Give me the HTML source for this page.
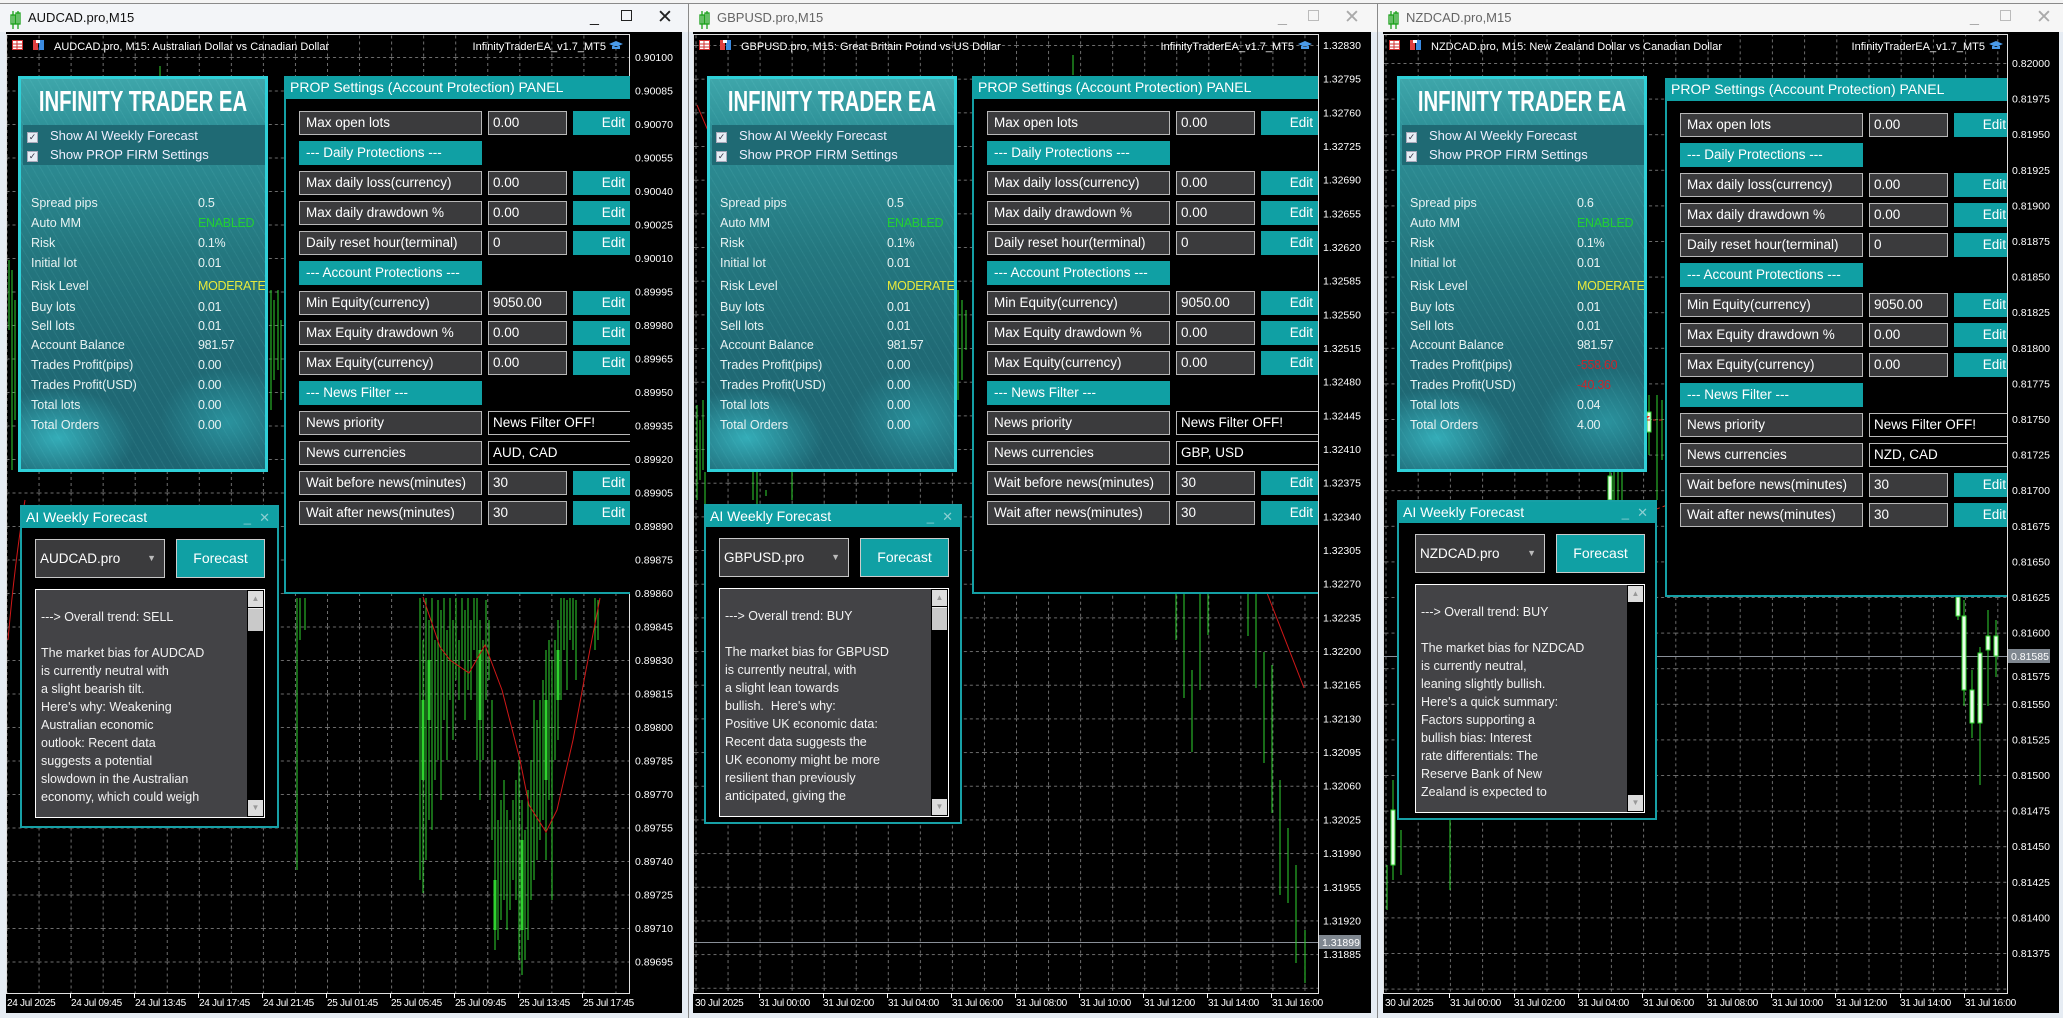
<!DOCTYPE html>
<html><head><meta charset="utf-8">
<style>
*{margin:0;padding:0}
body{width:2063px;height:1018px;position:relative;overflow:hidden;background:#e6ecf3;font-family:"Liberation Sans",sans-serif}
.a{position:absolute}
.tb{position:absolute;top:4px;height:28px;background:#f3f5f8}
.tt{position:absolute;top:10px;font-size:13px;color:#111;white-space:nowrap}
.tt.in{color:#666}
.wb{position:absolute;top:32px;height:981px;background:#000}
.sp{position:absolute;width:250px;height:396px;box-sizing:border-box;border:3px solid #2fd0d8;overflow:hidden;
background:radial-gradient(ellipse 45% 18% at 15% 92%,rgba(70,230,240,.55),rgba(70,230,240,0) 70%),radial-gradient(ellipse 40% 20% at 85% 88%,rgba(60,210,220,.4),rgba(60,210,220,0) 70%),repeating-linear-gradient(60deg,rgba(255,255,255,0) 0 6px,rgba(150,240,245,.07) 6px 7px),linear-gradient(180deg,#3ea6aa 0%,#2f9299 12%,#24777f 45%,#206a75 70%,#1e6673 100%);color:#e8f2f2;font-size:12.5px}
.sp .ti{position:absolute;left:50%;top:6px;font-weight:bold;font-size:29px;color:#fff;line-height:34px;white-space:nowrap;transform:translateX(-50%) scaleX(.7)}
.sp .cb{position:absolute;left:2px;right:0;top:46px;height:40px;background:#1f6a74}
.sp .ck{position:absolute;left:4px;width:9px;height:9px;background:#e8eef5;border:1px solid #aab;font-size:9px;line-height:9px;color:#334;text-align:center}
.sp .cl{position:absolute;left:27px;font-size:13px;color:#eef}
.sp .l{position:absolute;left:10px;line-height:16px;white-space:nowrap}
.sp .v{position:absolute;left:177px;line-height:16px;white-space:nowrap;letter-spacing:-.3px}
.g{color:#22d033}.y{color:#e8ea3a}.rd{color:#c8262c}
.pp{position:absolute;background:#000;border-left:2px solid #14a0a5;border-bottom:2px solid #14a0a5;overflow:hidden;box-sizing:border-box}
.pp .h{position:absolute;left:0;top:0;width:400px;height:23px;background:#10a0a4;color:#fff;font-size:14px;line-height:23px;padding-left:4px;white-space:nowrap}
.r{position:absolute;height:24px;box-sizing:border-box;border:1px solid #b8b8b8;background:#3b3b3d;color:#fff;font-size:13.5px;line-height:22px;padding-left:6px;white-space:nowrap;overflow:hidden}
.r.k{left:13px;width:183px}
.r.v{left:202px;width:79px;padding-left:4px}
.r.w{left:202px;width:200px;background:#000;padding-left:4px}
.r.e{left:287px;width:57px;background:#10a0a4;border-color:#10a0a4;text-align:right;padding-right:4px}
.r.s{left:13px;width:183px;background:#10a0a4;border-color:#10a0a4}
.fw{position:absolute;background:#000;border:2px solid #17a0a6;box-sizing:border-box}
.fw .h{position:absolute;left:0;right:0;top:0;height:21px;background:#10a0a4;color:#fff;font-size:14px;line-height:21px;padding-left:4px}
.fw .h i{position:absolute;top:0;font-style:normal;color:#8ccfd2;font-size:13px}
.fw .dd{position:absolute;left:13px;top:32px;width:130px;height:39px;box-sizing:border-box;border:1px solid #c8c8c8;background:#3b3b3d;color:#fff;font-size:13.5px;line-height:37px;padding-left:4px}
.fw .dd b{position:absolute;right:8px;top:0;font-size:9px;color:#bbb;font-weight:normal}
.fw .bt{position:absolute;left:154px;top:32px;width:89px;height:39px;box-sizing:border-box;border:1px solid #ccc;background:#10a0a4;color:#fff;font-size:14px;line-height:37px;text-align:center}
.fw .ta{position:absolute;left:13px;top:82px;width:230px;height:229px;box-sizing:border-box;border:1px solid #fff;background:#434346;color:#f2f2f2;font-size:12.5px;line-height:18px;padding:18px 0 0 5px;white-space:pre;overflow:hidden}
.fw .sb{position:absolute;right:0;top:0;width:17px;height:227px;background:#000}
.fw .sb .u,.fw .sb .d{position:absolute;left:1px;width:15px;height:16px;background:#dcdcdc;color:#999;font-size:8px;text-align:center;line-height:16px}
.fw .sb .u{top:1px}.fw .sb .d{bottom:1px}
.fw .sb .t{position:absolute;left:1px;top:18px;width:15px;height:22px;background:#c9c9c9;border-top:1px solid #eee}
.btn{position:absolute;top:9px;font-size:16px;color:#222}
.btn.in{color:#aaa}
</style></head><body>
<div class="a" style="left:0;top:0;width:2063px;height:3px;background:#f4f4f4"></div>
<div class="a" style="left:0;top:3px;width:2063px;height:1px;background:#8a8a8a"></div>
<div class="a" style="left:688px;top:4px;width:1px;height:1014px;background:#8a8a8a"></div>
<div class="a" style="left:1377px;top:4px;width:1px;height:1014px;background:#8a8a8a"></div>

<div class="tb" style="left:0;width:688px"></div>
<div class="tb" style="left:689px;width:688px;background:#f6f6f6"></div>
<div class="tb" style="left:1378px;width:685px;background:#f6f6f6"></div>
<svg class="a" style="left:0;top:0" width="2063" height="32">
<g fill="none" stroke="#1aa01a" stroke-width="1.3">
<path d="M13 11V29M18 11V29"/><rect x="11" y="15" width="4" height="9"/><rect x="16" y="13" width="4" height="11"/>
<path d="M702 11V29M707 11V29"/><rect x="700" y="15" width="4" height="9"/><rect x="705" y="13" width="4" height="11"/>
<path d="M1391 11V29M1396 11V29"/><rect x="1389" y="15" width="4" height="9"/><rect x="1394" y="13" width="4" height="11"/>
</g></svg>
<div class="tt" style="left:28px">AUDCAD.pro,M15</div>
<div class="tt in" style="left:717px">GBPUSD.pro,M15</div>
<div class="tt in" style="left:1406px">NZDCAD.pro,M15</div>
<div class="btn" style="left:590px">_</div><div class="btn" style="left:621px;top:10px;width:11px;height:11px;border:1.5px solid #222;box-sizing:border-box"></div><div class="btn" style="left:657px;top:6px;font-size:19px">✕</div>
<div class="btn in" style="left:1278px">_</div><div class="btn in" style="left:1308px;top:10px;width:11px;height:11px;border:1.5px solid #bbb;box-sizing:border-box"></div><div class="btn in" style="left:1344px;top:6px;font-size:19px">✕</div>
<div class="btn in" style="left:1970px">_</div><div class="btn in" style="left:2000px;top:10px;width:11px;height:11px;border:1.5px solid #bbb;box-sizing:border-box"></div><div class="btn in" style="left:2036px;top:6px;font-size:19px">✕</div>

<div class="wb" style="left:6px;width:676px"></div>
<div class="wb" style="left:693px;width:678px"></div>
<div class="wb" style="left:1383px;width:676px"></div>

<svg class="a" style="left:0;top:0" width="2063" height="1018" font-family="Liberation Sans, sans-serif" font-size="10.5">
<defs>
<pattern id="g1" x="6.5" y="57" width="32.05" height="33.5" patternUnits="userSpaceOnUse"><path d="M0 0.5H32.05M0.5 0V33.5" stroke="#6e6e6e" stroke-dasharray="3 3"/></pattern>
<pattern id="g2" x="695.5" y="45" width="32.05" height="33.67" patternUnits="userSpaceOnUse"><path d="M0 0.5H32.05M0.5 0V33.67" stroke="#6e6e6e" stroke-dasharray="3 3"/></pattern>
<pattern id="g3" x="1385.5" y="63" width="32.2" height="35.6" patternUnits="userSpaceOnUse"><path d="M0 0.5H32.2M0.5 0V35.6" stroke="#6e6e6e" stroke-dasharray="3 3"/></pattern>
</defs>
<rect x="7" y="35" width="622" height="958" fill="url(#g1)"/>
<rect x="694" y="35" width="624" height="958" fill="url(#g2)"/>
<rect x="1384" y="35" width="623" height="958" fill="url(#g3)"/>
<g fill="none" stroke="#e0e0e0"><rect x="6.5" y="34.5" width="623" height="959"/><rect x="693.5" y="34.5" width="625" height="959"/><rect x="1383.5" y="34.5" width="624" height="959"/></g>

<path d="M694 942.5H1318M1384 656.5H2007" stroke="#8a9099"/>
<rect x="1319" y="935" width="42" height="14" fill="#7f8790"/><text x="1322" y="946" fill="#fff">1.31899</text>
<rect x="2008" y="649" width="42" height="14" fill="#7f8790"/><text x="2011" y="660" fill="#fff">0.81585</text>

<g stroke="#2fd32f" stroke-width="1" fill="none">
<path d="M297 598V870M300 598V640M305 598V630M420 598V880M423 640V893M426 598V860M429 620V820M432 598V830M435 640V780M438 600V760M441 610V800M444 598V720M447 630V760M450 598V700M453 620V740M456 598V680M459 640V700M462 598V660M465 610V720M468 598V690M471 620V700M474 598V650M477 598V760M480 620V800M483 640V760M486 600V700M489 620V680M492 700V840M495 760V950M498 820V940M501 800V920M504 780V900M507 810V930M510 820V910M513 800V880M516 780V900M519 760V960M522 800V975M525 830V960M528 790V940M531 760V900M534 700V880M537 720V860M540 700V840M543 680V820M546 650V860M549 640V800M552 660V900M555 640V760M558 620V740M561 598V700M564 598V650M567 600V690M570 598V640M573 598V650M576 600V680M595 598V650M598 600V640"/>
<path d="M160 66V76M271 290V410M274 300V380M278 290V370M281 320V400M9 260V330M12 270V470M15 300V420"/>
<path stroke-width="3" d="M423 700V780M495 880V930M522 840V930M546 700V780M558 650V700M429 660V720M480 650V720"/>
<path d="M1176 593V640M1184 593V698M1192 670V752M1200 593V690M1208 593V635M1248 593V636M1256 593V688M1264 652V763M1272 665V813M1280 780V895M1288 828V903M1296 865V963M1305 930V983M1073 55V75M958 290V400M962 300V380M966 310V350M697 405V500M700 420V480M703 400V470M705 472V505M753 472V500M757 472V505M792 472V500M766 490V496"/>
<path d="M1387 865V910M1393 780V880M1401 830V875M1450 810V890M1964 600V706M1972 670V738M1980 647V785M1988 610V706M1996 620V677M1958 590V620M1649 395V455M1657 395V500M1662 400V460M1610 472V500M1614 472V500M1618 472V500M1622 472V500"/>
</g>
<g stroke="#2fd32f" fill="#e8ffe8"><rect x="1391" y="810" width="4" height="55"/><rect x="1956" y="597" width="4" height="19"/><rect x="1962" y="616" width="4" height="74"/><rect x="1970" y="690" width="4" height="33"/><rect x="1978" y="653" width="4" height="70"/><rect x="1986" y="636" width="4" height="14"/><rect x="1994" y="636" width="4" height="20"/><rect x="1647" y="412" width="4" height="20"/><rect x="1608" y="476" width="4" height="24"/></g>
<g stroke="#d01818" fill="none"><polyline points="423,597 440,647 450,660 469,673 485,645 502,690 520,760 529,805 546,832 557,810 573,740 586,670 600,598"/><path d="M8 640Q15 560 25 500M1267 593L1304 688M697 105L712 140"/></g>
<g stroke="#d03020" stroke-dasharray="3 3" fill="none"><path d="M1635 420H1862M1745 108L1862 430M1862 432L1654 510M1654 510L1517 565"/></g>
<g fill="#e03020"><path d="M1640 411h7v5h3l-6.5 6-6.5-6h3z"/><path d="M1742 104h7v5h3l-6.5 6-6.5-6h3z"/><path d="M1511 558h7v5h3l-6.5 6-6.5-6h3z"/></g>
<path d="M1866 428l5 6h-3v4h-4v-4h-3z" fill="#2a6de0"/>

<g>
<rect x="12.5" y="40.5" width="10" height="9" fill="#fff" stroke="#d03030"/><path d="M12 44H23M12 47H23M17 40V50" stroke="#d03030"/>
<rect x="33" y="40" width="5" height="10" fill="#e04040"/><rect x="39" y="40" width="5" height="10" fill="#3a8ae0"/><rect x="36" y="40" width="4" height="3" fill="#fff"/>
<rect x="699.5" y="40.5" width="10" height="9" fill="#fff" stroke="#d03030"/><path d="M699 44H710M699 47H710M704 40V50" stroke="#d03030"/>
<rect x="720" y="40" width="5" height="10" fill="#e04040"/><rect x="726" y="40" width="5" height="10" fill="#3a8ae0"/><rect x="723" y="40" width="4" height="3" fill="#fff"/>
<rect x="1389.5" y="40.5" width="10" height="9" fill="#fff" stroke="#d03030"/><path d="M1389 44H1400M1389 47H1400M1394 40V50" stroke="#d03030"/>
<rect x="1410" y="40" width="5" height="10" fill="#e04040"/><rect x="1416" y="40" width="5" height="10" fill="#3a8ae0"/><rect x="1413" y="40" width="4" height="3" fill="#fff"/>
</g>
<g fill="#fff" font-size="11">
<text x="54" y="50">AUDCAD.pro, M15:  Australian Dollar vs Canadian Dollar</text>
<text x="741" y="50">GBPUSD.pro, M15:  Great Britain Pound vs US Dollar</text>
<text x="1431" y="50">NZDCAD.pro, M15:  New Zealand Dollar vs Canadian Dollar</text>
<text x="606" y="50" text-anchor="end">InfinityTraderEA_v1.7_MT5</text>
<text x="1294" y="50" text-anchor="end">InfinityTraderEA_v1.7_MT5</text>
<text x="1985" y="50" text-anchor="end">InfinityTraderEA_v1.7_MT5</text>
</g>
<g fill="#4a9ae8"><path d="M609 44l7-3 7 3-7 3z M612 46v3h8v-3"/><path d="M1298 44l7-3 7 3-7 3z M1301 46v3h8v-3"/><path d="M1989 44l7-3 7 3-7 3z M1992 46v3h8v-3"/></g>

<g fill="#fff">
<text x="635" y="61">0.90100</text><text x="635" y="94.5">0.90085</text><text x="635" y="128">0.90070</text><text x="635" y="161.5">0.90055</text><text x="635" y="195">0.90040</text><text x="635" y="228.5">0.90025</text><text x="635" y="262">0.90010</text><text x="635" y="295.5">0.89995</text><text x="635" y="329">0.89980</text><text x="635" y="362.5">0.89965</text><text x="635" y="396">0.89950</text><text x="635" y="429.5">0.89935</text><text x="635" y="463">0.89920</text><text x="635" y="496.5">0.89905</text><text x="635" y="530">0.89890</text><text x="635" y="563.5">0.89875</text><text x="635" y="597">0.89860</text><text x="635" y="630.5">0.89845</text><text x="635" y="664">0.89830</text><text x="635" y="697.5">0.89815</text><text x="635" y="731">0.89800</text><text x="635" y="764.5">0.89785</text><text x="635" y="798">0.89770</text><text x="635" y="831.5">0.89755</text><text x="635" y="865">0.89740</text><text x="635" y="898.5">0.89725</text><text x="635" y="932">0.89710</text><text x="635" y="965.5">0.89695</text>
<text x="1323" y="49">1.32830</text><text x="1323" y="82.7">1.32795</text><text x="1323" y="116.3">1.32760</text><text x="1323" y="150">1.32725</text><text x="1323" y="183.7">1.32690</text><text x="1323" y="217.4">1.32655</text><text x="1323" y="251">1.32620</text><text x="1323" y="284.7">1.32585</text><text x="1323" y="318.4">1.32550</text><text x="1323" y="352">1.32515</text><text x="1323" y="385.7">1.32480</text><text x="1323" y="419.4">1.32445</text><text x="1323" y="453">1.32410</text><text x="1323" y="486.7">1.32375</text><text x="1323" y="520.4">1.32340</text><text x="1323" y="554">1.32305</text><text x="1323" y="587.7">1.32270</text><text x="1323" y="621.4">1.32235</text><text x="1323" y="655">1.32200</text><text x="1323" y="688.7">1.32165</text><text x="1323" y="722.4">1.32130</text><text x="1323" y="756.1">1.32095</text><text x="1323" y="789.7">1.32060</text><text x="1323" y="823.4">1.32025</text><text x="1323" y="857.1">1.31990</text><text x="1323" y="890.8">1.31955</text><text x="1323" y="924.4">1.31920</text><text x="1323" y="958.1">1.31885</text>
<text x="2012" y="67">0.82000</text><text x="2012" y="102.6">0.81975</text><text x="2012" y="138.2">0.81950</text><text x="2012" y="173.8">0.81925</text><text x="2012" y="209.4">0.81900</text><text x="2012" y="245">0.81875</text><text x="2012" y="280.6">0.81850</text><text x="2012" y="316.2">0.81825</text><text x="2012" y="351.8">0.81800</text><text x="2012" y="387.4">0.81775</text><text x="2012" y="423">0.81750</text><text x="2012" y="458.6">0.81725</text><text x="2012" y="494.2">0.81700</text><text x="2012" y="529.8">0.81675</text><text x="2012" y="565.4">0.81650</text><text x="2012" y="601">0.81625</text><text x="2012" y="636.6">0.81600</text><text x="2012" y="680">0.81575</text><text x="2012" y="707.8">0.81550</text><text x="2012" y="743.4">0.81525</text><text x="2012" y="779">0.81500</text><text x="2012" y="814.6">0.81475</text><text x="2012" y="850.2">0.81450</text><text x="2012" y="885.8">0.81425</text><text x="2012" y="921.4">0.81400</text><text x="2012" y="957">0.81375</text>
</g>
<g fill="#fff" font-size="10" letter-spacing="-0.3">
<text x="7" y="1006">24 Jul 2025</text><text x="71" y="1006">24 Jul 09:45</text><text x="135" y="1006">24 Jul 13:45</text><text x="199" y="1006">24 Jul 17:45</text><text x="263" y="1006">24 Jul 21:45</text><text x="327" y="1006">25 Jul 01:45</text><text x="391" y="1006">25 Jul 05:45</text><text x="455" y="1006">25 Jul 09:45</text><text x="519" y="1006">25 Jul 13:45</text><text x="583" y="1006">25 Jul 17:45</text>
<text x="695" y="1006">30 Jul 2025</text><text x="759" y="1006">31 Jul 00:00</text><text x="823" y="1006">31 Jul 02:00</text><text x="888" y="1006">31 Jul 04:00</text><text x="952" y="1006">31 Jul 06:00</text><text x="1016" y="1006">31 Jul 08:00</text><text x="1080" y="1006">31 Jul 10:00</text><text x="1144" y="1006">31 Jul 12:00</text><text x="1208" y="1006">31 Jul 14:00</text><text x="1272" y="1006">31 Jul 16:00</text>
<text x="1385" y="1006">30 Jul 2025</text><text x="1450" y="1006">31 Jul 00:00</text><text x="1514" y="1006">31 Jul 02:00</text><text x="1578" y="1006">31 Jul 04:00</text><text x="1643" y="1006">31 Jul 06:00</text><text x="1707" y="1006">31 Jul 08:00</text><text x="1772" y="1006">31 Jul 10:00</text><text x="1836" y="1006">31 Jul 12:00</text><text x="1900" y="1006">31 Jul 14:00</text><text x="1965" y="1006">31 Jul 16:00</text>
</g>
<g stroke="#fff"><path d="M70.5 993V998M134.5 993V998M198.5 993V998M262.5 993V998M326.5 993V998M390.5 993V998M454.5 993V998M518.5 993V998M582.5 993V998M759.5 993V998M823.5 993V998M887.5 993V998M951.5 993V998M1015.5 993V998M1079.5 993V998M1143.5 993V998M1207.5 993V998M1271.5 993V998M1449.5 993V998M1514.5 993V998M1578.5 993V998M1642.5 993V998M1707.5 993V998M1771.5 993V998M1835.5 993V998M1900.5 993V998M1964.5 993V998"/></g>
</svg>

<div class="sp" style="left:18px;top:76px">
<div class="ti">INFINITY TRADER EA</div>
<div class="cb"><div class="ck" style="top:7px">✓</div><div class="cl" style="top:3px">Show AI Weekly Forecast</div><div class="ck" style="top:26px">✓</div><div class="cl" style="top:22px">Show PROP FIRM Settings</div></div>
<div class="l" style="top:116px">Spread pips</div><div class="v" style="top:116px">0.5</div>
<div class="l" style="top:136px">Auto MM</div><div class="v g" style="top:136px">ENABLED</div>
<div class="l" style="top:156px">Risk</div><div class="v" style="top:156px">0.1%</div>
<div class="l" style="top:176px">Initial lot</div><div class="v" style="top:176px">0.01</div>
<div class="l" style="top:199px">Risk Level</div><div class="v y" style="top:199px">MODERATE</div>
<div class="l" style="top:220px">Buy lots</div><div class="v" style="top:220px">0.01</div>
<div class="l" style="top:239px">Sell lots</div><div class="v" style="top:239px">0.01</div>
<div class="l" style="top:258px">Account Balance</div><div class="v" style="top:258px">981.57</div>
<div class="l" style="top:278px">Trades Profit(pips)</div><div class="v" style="top:278px">0.00</div>
<div class="l" style="top:298px">Trades Profit(USD)</div><div class="v" style="top:298px">0.00</div>
<div class="l" style="top:318px">Total lots</div><div class="v" style="top:318px">0.00</div>
<div class="l" style="top:338px">Total Orders</div><div class="v" style="top:338px">0.00</div>
</div>
<div class="sp" style="left:707px;top:76px">
<div class="ti">INFINITY TRADER EA</div>
<div class="cb"><div class="ck" style="top:7px">✓</div><div class="cl" style="top:3px">Show AI Weekly Forecast</div><div class="ck" style="top:26px">✓</div><div class="cl" style="top:22px">Show PROP FIRM Settings</div></div>
<div class="l" style="top:116px">Spread pips</div><div class="v" style="top:116px">0.5</div>
<div class="l" style="top:136px">Auto MM</div><div class="v g" style="top:136px">ENABLED</div>
<div class="l" style="top:156px">Risk</div><div class="v" style="top:156px">0.1%</div>
<div class="l" style="top:176px">Initial lot</div><div class="v" style="top:176px">0.01</div>
<div class="l" style="top:199px">Risk Level</div><div class="v y" style="top:199px">MODERATE</div>
<div class="l" style="top:220px">Buy lots</div><div class="v" style="top:220px">0.01</div>
<div class="l" style="top:239px">Sell lots</div><div class="v" style="top:239px">0.01</div>
<div class="l" style="top:258px">Account Balance</div><div class="v" style="top:258px">981.57</div>
<div class="l" style="top:278px">Trades Profit(pips)</div><div class="v" style="top:278px">0.00</div>
<div class="l" style="top:298px">Trades Profit(USD)</div><div class="v" style="top:298px">0.00</div>
<div class="l" style="top:318px">Total lots</div><div class="v" style="top:318px">0.00</div>
<div class="l" style="top:338px">Total Orders</div><div class="v" style="top:338px">0.00</div>
</div>
<div class="sp" style="left:1397px;top:76px">
<div class="ti">INFINITY TRADER EA</div>
<div class="cb"><div class="ck" style="top:7px">✓</div><div class="cl" style="top:3px">Show AI Weekly Forecast</div><div class="ck" style="top:26px">✓</div><div class="cl" style="top:22px">Show PROP FIRM Settings</div></div>
<div class="l" style="top:116px">Spread pips</div><div class="v" style="top:116px">0.6</div>
<div class="l" style="top:136px">Auto MM</div><div class="v g" style="top:136px">ENABLED</div>
<div class="l" style="top:156px">Risk</div><div class="v" style="top:156px">0.1%</div>
<div class="l" style="top:176px">Initial lot</div><div class="v" style="top:176px">0.01</div>
<div class="l" style="top:199px">Risk Level</div><div class="v y" style="top:199px">MODERATE</div>
<div class="l" style="top:220px">Buy lots</div><div class="v" style="top:220px">0.01</div>
<div class="l" style="top:239px">Sell lots</div><div class="v" style="top:239px">0.01</div>
<div class="l" style="top:258px">Account Balance</div><div class="v" style="top:258px">981.57</div>
<div class="l" style="top:278px">Trades Profit(pips)</div><div class="v rd" style="top:278px">-558.60</div>
<div class="l" style="top:298px">Trades Profit(USD)</div><div class="v rd" style="top:298px">-40.36</div>
<div class="l" style="top:318px">Total lots</div><div class="v" style="top:318px">0.04</div>
<div class="l" style="top:338px">Total Orders</div><div class="v" style="top:338px">4.00</div>
</div>

<div class="pp" style="left:284px;top:76px;width:346px;height:518px">
<div class="h">PROP Settings (Account Protection) PANEL</div>
<div class="r k" style="top:35px">Max open lots</div><div class="r v" style="top:35px">0.00</div><div class="r e" style="top:35px">Edit</div>
<div class="r s" style="top:65px">--- Daily Protections ---</div>
<div class="r k" style="top:95px">Max daily loss(currency)</div><div class="r v" style="top:95px">0.00</div><div class="r e" style="top:95px">Edit</div>
<div class="r k" style="top:125px">Max daily drawdown %</div><div class="r v" style="top:125px">0.00</div><div class="r e" style="top:125px">Edit</div>
<div class="r k" style="top:155px">Daily reset hour(terminal)</div><div class="r v" style="top:155px">0</div><div class="r e" style="top:155px">Edit</div>
<div class="r s" style="top:185px">--- Account Protections ---</div>
<div class="r k" style="top:215px">Min Equity(currency)</div><div class="r v" style="top:215px">9050.00</div><div class="r e" style="top:215px">Edit</div>
<div class="r k" style="top:245px">Max Equity drawdown %</div><div class="r v" style="top:245px">0.00</div><div class="r e" style="top:245px">Edit</div>
<div class="r k" style="top:275px">Max Equity(currency)</div><div class="r v" style="top:275px">0.00</div><div class="r e" style="top:275px">Edit</div>
<div class="r s" style="top:305px">--- News Filter ---</div>
<div class="r k" style="top:335px">News priority</div><div class="r w" style="top:335px">News Filter OFF!</div>
<div class="r k" style="top:365px">News currencies</div><div class="r w" style="top:365px">AUD, CAD</div>
<div class="r k" style="top:395px">Wait before news(minutes)</div><div class="r v" style="top:395px">30</div><div class="r e" style="top:395px">Edit</div>
<div class="r k" style="top:425px">Wait after news(minutes)</div><div class="r v" style="top:425px">30</div><div class="r e" style="top:425px">Edit</div>
</div>
<div class="pp" style="left:972px;top:76px;width:346px;height:518px">
<div class="h">PROP Settings (Account Protection) PANEL</div>
<div class="r k" style="top:35px">Max open lots</div><div class="r v" style="top:35px">0.00</div><div class="r e" style="top:35px">Edit</div>
<div class="r s" style="top:65px">--- Daily Protections ---</div>
<div class="r k" style="top:95px">Max daily loss(currency)</div><div class="r v" style="top:95px">0.00</div><div class="r e" style="top:95px">Edit</div>
<div class="r k" style="top:125px">Max daily drawdown %</div><div class="r v" style="top:125px">0.00</div><div class="r e" style="top:125px">Edit</div>
<div class="r k" style="top:155px">Daily reset hour(terminal)</div><div class="r v" style="top:155px">0</div><div class="r e" style="top:155px">Edit</div>
<div class="r s" style="top:185px">--- Account Protections ---</div>
<div class="r k" style="top:215px">Min Equity(currency)</div><div class="r v" style="top:215px">9050.00</div><div class="r e" style="top:215px">Edit</div>
<div class="r k" style="top:245px">Max Equity drawdown %</div><div class="r v" style="top:245px">0.00</div><div class="r e" style="top:245px">Edit</div>
<div class="r k" style="top:275px">Max Equity(currency)</div><div class="r v" style="top:275px">0.00</div><div class="r e" style="top:275px">Edit</div>
<div class="r s" style="top:305px">--- News Filter ---</div>
<div class="r k" style="top:335px">News priority</div><div class="r w" style="top:335px">News Filter OFF!</div>
<div class="r k" style="top:365px">News currencies</div><div class="r w" style="top:365px">GBP, USD</div>
<div class="r k" style="top:395px">Wait before news(minutes)</div><div class="r v" style="top:395px">30</div><div class="r e" style="top:395px">Edit</div>
<div class="r k" style="top:425px">Wait after news(minutes)</div><div class="r v" style="top:425px">30</div><div class="r e" style="top:425px">Edit</div>
</div>
<div class="pp" style="left:1665px;top:78px;width:342px;height:519px">
<div class="h">PROP Settings (Account Protection) PANEL</div>
<div class="r k" style="top:35px">Max open lots</div><div class="r v" style="top:35px">0.00</div><div class="r e" style="top:35px">Edit</div>
<div class="r s" style="top:65px">--- Daily Protections ---</div>
<div class="r k" style="top:95px">Max daily loss(currency)</div><div class="r v" style="top:95px">0.00</div><div class="r e" style="top:95px">Edit</div>
<div class="r k" style="top:125px">Max daily drawdown %</div><div class="r v" style="top:125px">0.00</div><div class="r e" style="top:125px">Edit</div>
<div class="r k" style="top:155px">Daily reset hour(terminal)</div><div class="r v" style="top:155px">0</div><div class="r e" style="top:155px">Edit</div>
<div class="r s" style="top:185px">--- Account Protections ---</div>
<div class="r k" style="top:215px">Min Equity(currency)</div><div class="r v" style="top:215px">9050.00</div><div class="r e" style="top:215px">Edit</div>
<div class="r k" style="top:245px">Max Equity drawdown %</div><div class="r v" style="top:245px">0.00</div><div class="r e" style="top:245px">Edit</div>
<div class="r k" style="top:275px">Max Equity(currency)</div><div class="r v" style="top:275px">0.00</div><div class="r e" style="top:275px">Edit</div>
<div class="r s" style="top:305px">--- News Filter ---</div>
<div class="r k" style="top:335px">News priority</div><div class="r w" style="top:335px">News Filter OFF!</div>
<div class="r k" style="top:365px">News currencies</div><div class="r w" style="top:365px">NZD, CAD</div>
<div class="r k" style="top:395px">Wait before news(minutes)</div><div class="r v" style="top:395px">30</div><div class="r e" style="top:395px">Edit</div>
<div class="r k" style="top:425px">Wait after news(minutes)</div><div class="r v" style="top:425px">30</div><div class="r e" style="top:425px">Edit</div>
</div>

<div class="fw" style="left:20px;top:505px;width:259px;height:323px">
<div class="h">AI Weekly Forecast<i style="right:26px">_</i><i style="right:7px">✕</i></div>
<div class="dd">AUDCAD.pro<b>▼</b></div><div class="bt">Forecast</div>
<div class="ta">---&gt; Overall trend: SELL

The market bias for AUDCAD
is currently neutral with
a slight bearish tilt.
Here's why: Weakening
Australian economic
outlook: Recent data
suggests a potential
slowdown in the Australian
economy, which could weigh<div class="sb"><div class="u">▲</div><div class="t"></div><div class="d">▼</div></div></div>
</div>
<div class="fw" style="left:704px;top:504px;width:258px;height:320px">
<div class="h">AI Weekly Forecast<i style="right:26px">_</i><i style="right:7px">✕</i></div>
<div class="dd">GBPUSD.pro<b>▼</b></div><div class="bt">Forecast</div>
<div class="ta">---&gt; Overall trend: BUY

The market bias for GBPUSD
is currently neutral, with
a slight lean towards
bullish.  Here's why:
Positive UK economic data:
Recent data suggests the
UK economy might be more
resilient than previously
anticipated, giving the<div class="sb"><div class="u">▲</div><div class="t"></div><div class="d">▼</div></div></div>
</div>
<div class="fw" style="left:1397px;top:500px;width:260px;height:320px">
<div class="h">AI Weekly Forecast<i style="right:26px">_</i><i style="right:7px">✕</i></div>
<div class="dd" style="left:16px">NZDCAD.pro<b>▼</b></div><div class="bt" style="left:157px">Forecast</div>
<div class="ta" style="left:16px;width:230px">---&gt; Overall trend: BUY

The market bias for NZDCAD
is currently neutral,
leaning slightly bullish.
Here's a quick summary:
Factors supporting a
bullish bias: Interest
rate differentials: The
Reserve Bank of New
Zealand is expected to<div class="sb"><div class="u">▲</div><div class="d">▼</div></div></div>
</div>
</body></html>
